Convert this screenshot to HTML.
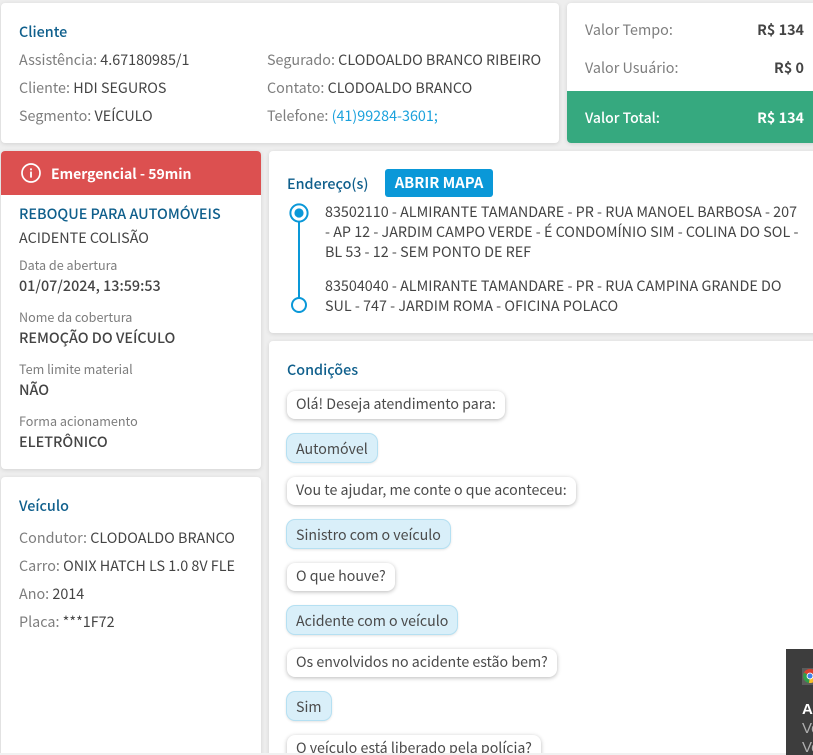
<!DOCTYPE html>
<html lang="pt-BR">
<head>
<meta charset="utf-8">
<title>Atendimento</title>
<style>
html,body{margin:0;padding:0;width:813px;height:755px;overflow:hidden;background:#eeeeee}
body{position:relative;font-family:"Noto Sans CJK JP","Liberation Sans",sans-serif;font-size:14.35px;color:#444}
.c{position:absolute;background:#fff;border-radius:4px;box-shadow:0 1px 4px rgba(0,0,0,.12);overflow:hidden}
.t{position:absolute;white-space:nowrap;line-height:20px;height:20px}
.g{color:#7d7d7d}
.h{color:#0f5f8c;font-weight:500}
.b{color:#444;font-weight:500}
.s{font-size:12.6px}
.m{position:absolute;left:287px;height:28px;line-height:27px;padding:0 9px;box-sizing:border-box;border-radius:8px;background:#fff;box-shadow:0 1px 4px rgba(0,0,0,.28);white-space:nowrap;color:#4a4a4a;font-size:14.2px}
.r{background:#d9eff9;box-shadow:0 0 0 1px #b5e0f2,0 1px 3px rgba(0,0,0,.2);line-height:30px}
</style>
</head>
<body>
<div class="c" style="left:1px;top:3px;width:558px;height:140px"></div>
<div class="c" style="left:567px;top:3px;width:250px;height:140px"></div>
<div style="position:absolute;left:567px;top:91px;width:246px;height:52px;background:#36a97f;border-radius:0 0 0 4px"></div>
<div class="c" style="left:1px;top:151px;width:260px;height:318px"></div>
<div style="position:absolute;left:1px;top:151px;width:260px;height:44px;background:#dc5050;border-radius:4px 4px 0 0"></div>
<div class="c" style="left:1px;top:477px;width:260px;height:290px"></div>
<div class="c" style="left:269px;top:151px;width:550px;height:182px"></div>
<div class="c" style="left:269px;top:341px;width:550px;height:430px"></div>

<span class="t h" style="left:19px;top:22px">Cliente</span>
<span class="t" style="left:19px;top:50px"><span class="g">Assistência:</span> 4.67180985/1</span>
<span class="t" style="left:19px;top:78px"><span class="g">Cliente:</span> HDI SEGUROS</span>
<span class="t" style="left:19px;top:106px"><span class="g">Segmento:</span> VEÍCULO</span>
<span class="t" style="left:267px;top:50px"><span class="g">Segurado:</span> CLODOALDO BRANCO RIBEIRO</span>
<span class="t" style="left:267px;top:78px"><span class="g">Contato:</span> CLODOALDO BRANCO</span>
<span class="t" style="left:267px;top:106px"><span class="g">Telefone:</span> <span style="color:#1ba1dc">(41)99284-3601;</span></span>

<span class="t g" style="left:585px;top:20px">Valor Tempo:</span>
<span class="t" style="right:9px;top:20px;font-weight:700">R$ 134</span>
<span class="t g" style="left:585px;top:58px">Valor Usuário:</span>
<span class="t" style="right:9px;top:58px;font-weight:700">R$ 0</span>
<span class="t" style="left:585px;top:108px;color:#fff;font-weight:500;font-size:14px">Valor Total:</span>
<span class="t" style="right:9px;top:108px;color:#fff;font-weight:700">R$ 134</span>

<svg style="position:absolute;left:20px;top:162px" width="22" height="22" viewBox="0 0 22 22" fill="none"><circle cx="11" cy="11" r="9" stroke="#fff" stroke-width="1.7"/><rect x="10.1" y="9.6" width="1.8" height="6" fill="#fff"/><rect x="10.1" y="6.4" width="1.8" height="1.9" fill="#fff"/></svg>
<span class="t" style="left:51px;top:164px;color:#fff;font-weight:700;font-size:14px">Emergencial - 59min</span>
<span class="t h" style="left:19px;top:204px">REBOQUE PARA AUTOMÓVEIS</span>
<span class="t" style="left:19px;top:228px">ACIDENTE COLISÃO</span>
<span class="t g s" style="left:19px;top:255px">Data de abertura</span>
<span class="t b" style="left:19px;top:276px">01/07/2024, 13:59:53</span>
<span class="t g s" style="left:19px;top:307px">Nome da cobertura</span>
<span class="t b" style="left:19px;top:328px">REMOÇÃO DO VEÍCULO</span>
<span class="t g s" style="left:19px;top:359px">Tem limite material</span>
<span class="t b" style="left:19px;top:380px">NÃO</span>
<span class="t g s" style="left:19px;top:411px">Forma acionamento</span>
<span class="t b" style="left:19px;top:432px">ELETRÔNICO</span>

<span class="t h" style="left:19px;top:496px">Veículo</span>
<span class="t" style="left:19px;top:528px"><span class="g">Condutor:</span> CLODOALDO BRANCO</span>
<span class="t" style="left:19px;top:556px"><span class="g">Carro:</span> ONIX HATCH LS 1.0 8V FLE</span>
<span class="t" style="left:19px;top:584px"><span class="g">Ano:</span> 2014</span>
<span class="t" style="left:19px;top:612px"><span class="g">Placa:</span> ***1F72</span>

<span class="t h" style="left:287px;top:174px">Endereço(s)</span>
<div style="position:absolute;left:385px;top:169px;width:108px;height:28px;background:#0a98d8;border-radius:3px;color:#fff;font-weight:700;font-size:14.8px;text-align:center;line-height:28px">ABRIR MAPA</div>
<svg style="position:absolute;left:287px;top:200px" width="24" height="116" viewBox="0 0 24 116" fill="none"><line x1="12" y1="22" x2="12" y2="98" stroke="#0a98d8" stroke-width="2"/><circle cx="12" cy="13" r="8.6" stroke="#0a98d8" stroke-width="2" fill="#fff"/><circle cx="12" cy="13" r="4.6" fill="#0a98d8"/><circle cx="12" cy="105" r="7" stroke="#0a98d8" stroke-width="2" fill="#fff"/></svg>
<span class="t" style="left:325px;top:202px">83502110 - ALMIRANTE TAMANDARE - PR - RUA MANOEL BARBOSA - 207</span>
<span class="t" style="left:325px;top:222px">- AP 12 - JARDIM CAMPO VERDE - É CONDOMÍNIO SIM - COLINA DO SOL -</span>
<span class="t" style="left:325px;top:242px">BL 53 - 12 - SEM PONTO DE REF</span>
<span class="t" style="left:325px;top:276px">83504040 - ALMIRANTE TAMANDARE - PR - RUA CAMPINA GRANDE DO</span>
<span class="t" style="left:325px;top:296px">SUL - 747 - JARDIM ROMA - OFICINA POLACO</span>

<span class="t h" style="left:287px;top:360px">Condições</span>
<div class="m" style="top:391px">Olá! Deseja atendimento para:</div>
<div class="m r" style="top:434px">Automóvel</div>
<div class="m" style="top:477px">Vou te ajudar, me conte o que aconteceu:</div>
<div class="m r" style="top:520px">Sinistro com o veículo</div>
<div class="m" style="top:563px">O que houve?</div>
<div class="m r" style="top:606px">Acidente com o veículo</div>
<div class="m" style="top:649px">Os envolvidos no acidente estão bem?</div>
<div class="m r" style="top:692px">Sim</div>
<div class="m" style="top:735px">O veículo está liberado pela polícia?</div>

<div style="position:absolute;left:0;top:753px;width:813px;height:2px;background:#f1f1f1"></div>

<div style="position:absolute;left:786px;top:649px;width:27px;height:106px;background:#3d3d3d;overflow:hidden;font-family:'Liberation Sans',sans-serif">
<div style="position:absolute;left:16px;top:19px;width:20px;height:17px;background:#5c5c5c"></div>
<svg style="position:absolute;left:17px;top:20px" width="14" height="14" viewBox="0 0 14 14"><circle cx="7" cy="7" r="7" fill="#d9412f"/><path d="M7 7L1 3.5A7 7 0 0 0 6 14Z" fill="#2f9e4a"/><path d="M7 7L14 7A7 7 0 0 1 6 14Z" fill="#f6c02c"/><circle cx="7" cy="7" r="3.4" fill="#fff"/><circle cx="7" cy="7" r="2.5" fill="#3f7fe8"/></svg>
<span style="position:absolute;left:16px;top:52px;color:#fff;font-weight:700;font-size:15px;line-height:18px">A</span>
<span style="position:absolute;left:16px;top:71px;color:#b0b0b0;font-size:15px;line-height:18px">Vo</span>
<span style="position:absolute;left:16px;top:90px;color:#b0b0b0;font-size:15px;line-height:18px">Ve</span>
</div>
</body>
</html>
